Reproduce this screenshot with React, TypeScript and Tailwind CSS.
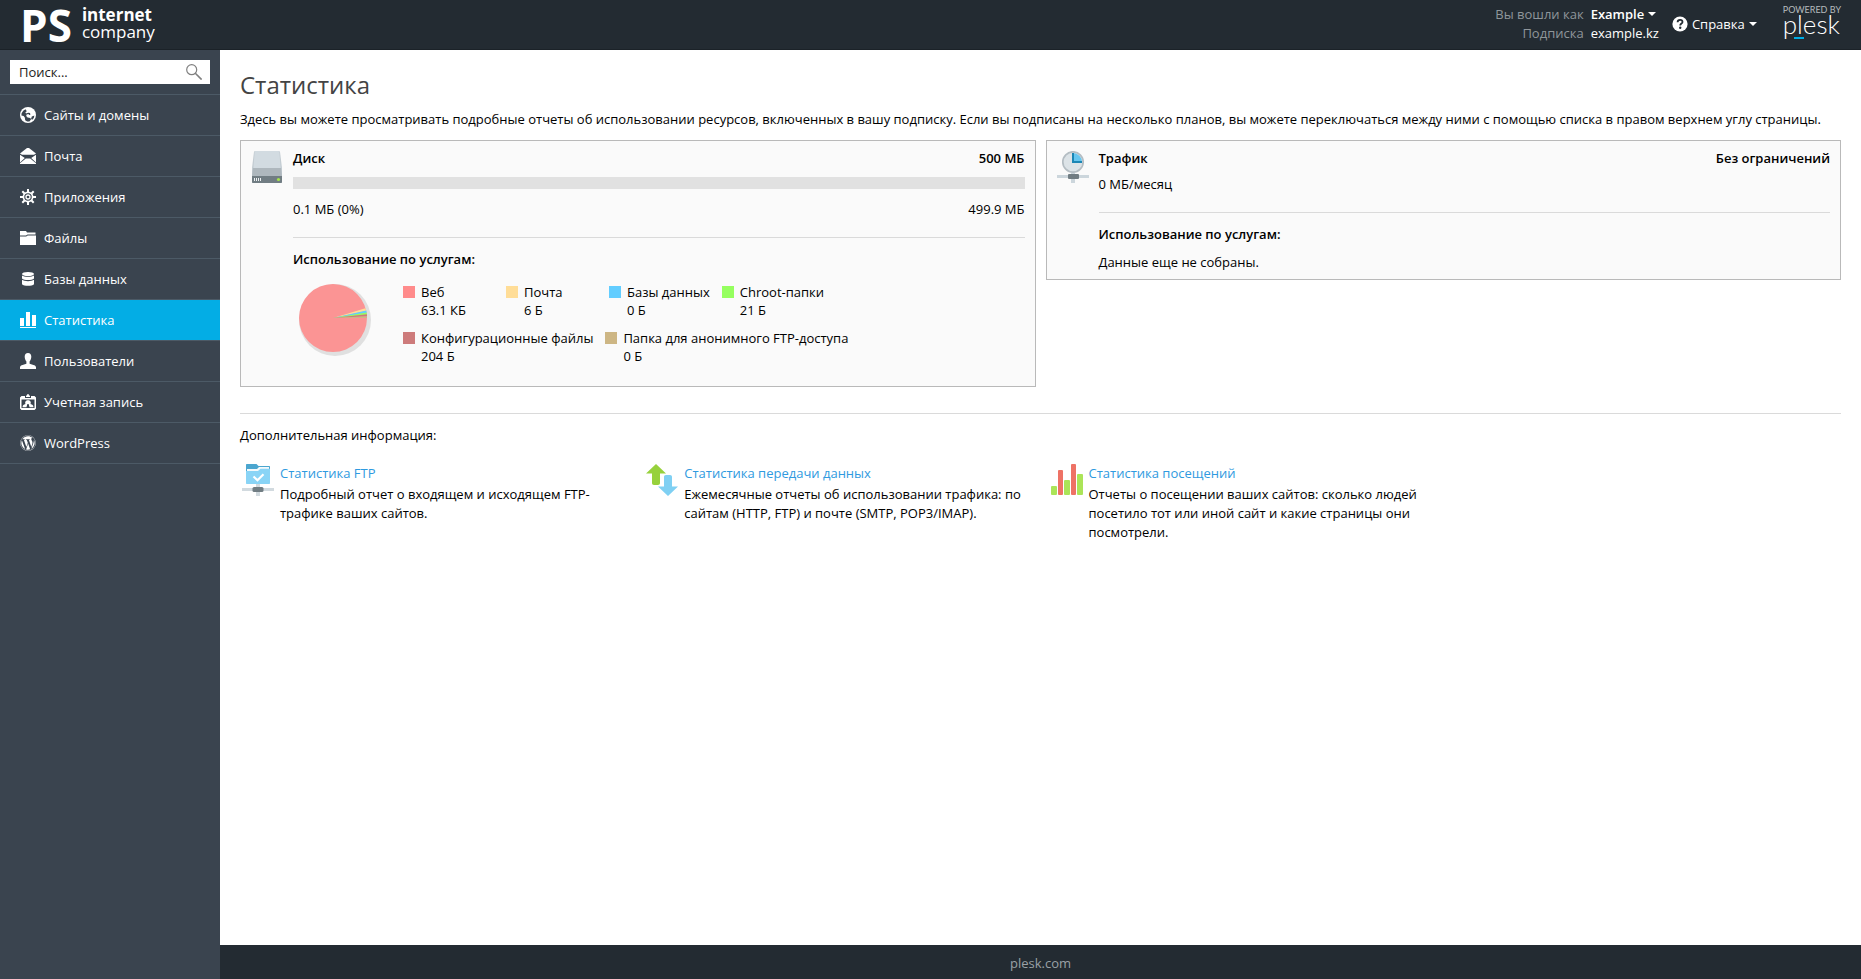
import type { ReactNode } from 'react';
import { FaWordpress } from 'react-icons/fa';

const menu: { label: string; icon: ReactNode; active?: boolean }[] = [
  { label: 'Сайты и домены', icon: <GlobeIcon /> },
  { label: 'Почта', icon: <MailIcon /> },
  { label: 'Приложения', icon: <GearIcon /> },
  { label: 'Файлы', icon: <FolderIcon /> },
  { label: 'Базы данных', icon: <DatabaseIcon /> },
  { label: 'Статистика', icon: <StatsIcon />, active: true },
  { label: 'Пользователи', icon: <UserIcon /> },
  { label: 'Учетная запись', icon: <AccountIcon /> },
  { label: 'WordPress', icon: <FaWordpress className="w-4 h-4" /> },
];

const services = [
  { name: 'Веб', value: '63.1 КБ', color: 'bg-[#ff8b8b]' },
  { name: 'Почта', value: '6 Б', color: 'bg-[#ffdd97]' },
  { name: 'Базы данных', value: '0 Б', color: 'bg-[#62cdff]' },
  { name: 'Chroot-папки', value: '21 Б', color: 'bg-[#95ff5f]' },
  { name: 'Конфигурационные файлы', value: '204 Б', color: 'bg-[#cd7b7b]' },
  { name: 'Папка для анонимного FTP-доступа', value: '0 Б', color: 'bg-[#cdb684]' },
];

const reports = [
  {
    title: 'Статистика FTP',
    text: 'Подробный отчет о входящем и исходящем FTP-трафике ваших сайтов.',
    icon: <FtpIcon />,
  },
  {
    title: 'Статистика передачи данных',
    text: 'Ежемесячные отчеты об использовании трафика: по сайтам (HTTP, FTP) и почте (SMTP, POP3/IMAP).',
    icon: <TransferIcon />,
  },
  {
    title: 'Статистика посещений',
    text: 'Отчеты о посещении ваших сайтов: сколько людей посетило тот или иной сайт и какие страницы они посмотрели.',
    icon: <VisitsIcon />,
  },
];

function GlobeIcon() {
  return (
    <svg viewBox="0 0 16 16" className="w-4 h-4">
      <circle cx="8" cy="8" r="8" fill="currentColor" />
      <path
        d="M5.500 2.200 3.200 3.800 1.600 6.200 1.400 8.400l2.200.6 1.200 1.600.4 2.600 2 1.400h2.200l1.600-2.200-.6-1.400-2.800-.4L6.200 9l.4-1.600 2-.4.4 1 1.400-.2-.4-1.800-1.800-.2L6 6.600l-.6-1.400 1.400-1z"
        fill="#3a444f"
      />
      <path d="M11.800 9.400l2.600-.8-.6 2.400-1.800 2-.8-1.600z" fill="#3a444f" />
    </svg>
  );
}

function MailIcon() {
  return (
    <svg viewBox="0 0 16 16" className="w-4 h-4" fill="currentColor">
      <path d="M0 5.600 7 0h2l7 5.600-2 1.200H2z" />
      <path d="M0 6.800 4.800 10 0 14.400zM16 6.800 11.200 10 16 14.400zM5.800 10.600h4.400L16 15.200v.8H0v-.8z" />
    </svg>
  );
}

function GearIcon() {
  return (
    <svg viewBox="0 0 16 16" className="w-4 h-4" fill="none" stroke="currentColor">
      <circle cx="8" cy="8" r="4.600" strokeWidth="1.700" />
      <circle cx="8" cy="8" r="2" strokeWidth="1.300" />
      <path
        d="M8 0v3M8 13v3M0 8h3M13 8h3M2.300 2.300l2.200 2.200M11.500 11.500l2.200 2.200M2.300 13.700l2.200-2.200M11.500 4.500l2.200-2.200"
        strokeWidth="2"
      />
    </svg>
  );
}

function FolderIcon() {
  return (
    <svg viewBox="0 0 16 16" className="w-4 h-4" fill="currentColor">
      <path d="M0 1h6l1 1.400h8.500V4.500H7.500L6 5.600H0z" />
      <path d="M0 6.600h6.200L7.800 5.500H16V15H0z" />
    </svg>
  );
}

function DatabaseIcon() {
  return (
    <svg viewBox="0 0 16 16" className="w-4 h-4" fill="currentColor">
      <ellipse cx="8" cy="3" rx="6" ry="2" />
      <path d="M2 4.400C4 6.200 12 6.200 14 4.400v3.200c-2 2-10 2-12 0z" />
      <path d="M2 8.800c2 1.800 10 1.800 12 0v4.400c-2 2.200-10 2.200-12 0z" />
    </svg>
  );
}

function StatsIcon() {
  return (
    <svg viewBox="0 0 16 16" className="w-4 h-4" fill="currentColor" shapeRendering="crispEdges">
      <path d="M0 6h4v8H0zM6 0h4v14H6zM12 3h4v11h-4zM0 15h16v1H0z" />
    </svg>
  );
}

function UserIcon() {
  return (
    <svg viewBox="0 0 16 16" className="w-4 h-4" fill="currentColor">
      <path d="M8 0c2.200 0 3.300 1.500 3.300 3.600 0 1.900-.7 3.800-1.700 4.900v2.200l4.600 1.500c1.200.4 1.800 1.200 1.800 2.400V16H0v-1.400c0-1.200.6-2 1.800-2.400l4.600-1.500V8.500C5.400 7.400 4.700 5.500 4.700 3.600 4.700 1.500 5.800 0 8 0z" />
    </svg>
  );
}

function AccountIcon() {
  return (
    <svg viewBox="0 0 16 16" className="w-4 h-4" fill="currentColor">
      <path d="M6 1.500h1C7 .6 7.400 0 8 0s1 .6 1 1.500h1V3H6z" />
      <path d="M1.500 2H5v2h6V2h3.500L16 3.500v11L14.500 16h-13L0 14.500v-11zM1.500 5.500V14h13V5.500z" fillRule="evenodd" />
      <path d="M2.500 13.300c0-2 1.200-2.700 3-3.300C4.900 8.800 4.900 6.200 8 6.200s3.100 2.600 2.500 3.800c1.800.6 3 1.300 3 3.300H9.600L8.600 10H7.400l-1 3.300z" />
    </svg>
  );
}

function SearchIcon() {
  return (
    <svg viewBox="0 0 16 16" className="w-4 h-4" fill="none" stroke="#808080">
      <circle cx="5.700" cy="5.700" r="5" strokeWidth="1.200" />
      <path d="M9.300 9.300 15.600 15.600" strokeWidth="1.600" />
    </svg>
  );
}

function Caret() {
  return (
    <svg viewBox="0 0 8 4" className="w-2 h-1" fill="currentColor">
      <path d="M0 0h8L4 4z" />
    </svg>
  );
}

function HelpIcon() {
  return (
    <svg viewBox="0 0 16 16" className="w-4 h-4">
      <circle cx="8" cy="8" r="7.600" fill="#fff" />
      <path d="M5.600 6.200c0-1.500 1-2.400 2.500-2.400s2.400.9 2.400 2.100C10.500 7.600 8.200 7.500 8.200 9.500" fill="none" stroke="#232b32" strokeWidth="1.800" />
      <circle cx="8.200" cy="11.800" r="1.200" fill="#232b32" />
    </svg>
  );
}

function DiskIcon() {
  return (
    <svg viewBox="0 0 32 32" className="w-8 h-8">
      <path d="M4.500 0h23c1 0 1.500.5 1.600 1.500L31 17v8H1v-8L2.900 1.500C3 .5 3.500 0 4.500 0z" fill="#c3ccd2" />
      <path d="M5 0h22c1 0 1.300.5 1.400 1.500L29.500 17h-27L3.600 1.500C3.700.5 4 0 5 0z" fill="#d2dbe1" />
      <path d="M2 17h28l1 8H1z" fill="#aeb7bd" />
      <path d="M1 25h30v6c0 .7-.3 1-1 1H2c-.7 0-1-.3-1-1z" fill="#717d83" />
      <path d="M3 27h1v3H3zM5 27h1v3H5zM7 27h1v3H7zM9 27h1v3H9z" fill="#eef1f3" />
      <circle cx="27.500" cy="28.500" r="1.600" fill="#a5e64b" />
    </svg>
  );
}

function TrafficIcon() {
  return (
    <svg viewBox="0 0 32 32" className="w-8 h-8">
      <path d="M14 22h4v10h-4zM0 24h32v3H0z" fill="#ccd6dc" />
      <circle cx="16" cy="11" r="10.200" fill="#dce3e7" stroke="#b4bdc3" strokeWidth="1.700" />
      <path d="M16 11V2a9 9 0 0 1 9 9z" fill="#66c6ef" />
      <path d="M16 2v9h9" fill="none" stroke="#1b86b4" strokeWidth="2" />
      <rect x="11" y="23" width="11" height="5" rx="1" fill="#717d83" />
    </svg>
  );
}

function FtpIcon() {
  return (
    <svg viewBox="0 0 32 32" className="w-8 h-8">
      <path d="M14 20h4v12h-4zM0 24h32v3H0z" fill="#d2dadf" />
      <path d="M5 0h9.500l2 2H27c.7 0 1 .3 1 1v6H4V1c0-.7.300-1 1-1z" fill="#4ba6cf" />
      <path d="M5 5h10l2-2h10v8H5z" fill="#f4fafc" />
      <path d="M4 7h12l2.500-2.200H28V19c0 .7-.3 1-1 1H5c-.7 0-1-.3-1-1z" fill="#89d4f6" />
      <path d="M11.500 12.500l4 3.700 6-6" fill="none" stroke="#fff" strokeWidth="2.200" />
      <rect x="10.500" y="23" width="11" height="5" rx="1.500" fill="#717d83" />
    </svg>
  );
}

function TransferIcon() {
  return (
    <svg viewBox="0 0 32 32" className="w-8 h-8">
      <path d="M10 0 20 9.500h-6V19c0 1.300-.7 2-2 2H8c-1.300 0-2-.7-2-2V9.500H0z" fill="#97d13c" />
      <path d="M22 32 12 22.500h6V13c0-1.300.7-2 2-2h4c1.300 0 2 .7 2 2v9.500h6z" fill="#7fd0f3" />
    </svg>
  );
}

function VisitsIcon() {
  return (
    <svg viewBox="0 0 32 32" className="w-8 h-8">
      <g fill="#abe458">
        <rect x="0" y="22" width="6" height="9" rx="1" />
        <rect x="13" y="16" width="6" height="15" rx="1" />
        <rect x="26" y="10" width="6" height="21" rx="1" />
      </g>
      <g fill="#ee7265">
        <rect x="7" y="6" width="5" height="25" rx="1" />
        <rect x="20" y="0" width="5" height="31" rx="1" />
      </g>
    </svg>
  );
}

function PieChart() {
  return (
    <svg viewBox="0 0 74 74" className="w-[74px] h-[74px] shrink-0">
      <circle cx="37" cy="37" r="36" fill="#e0e0e0" />
      <circle cx="35" cy="35" r="34" fill="#fb9494" />
      <path d="M35 35 67.400 25.200 68.300 28z" fill="#ffdd97" />
      <path d="M35 35 68.300 27.500 68.700 30z" fill="#62cdff" />
      <path d="M35 35 68.600 29.400 69 31.800z" fill="#95ff5f" />
      <path d="M35 35 68.900 31.200 69 33.500z" fill="#cd7b7b" />
      <path d="M35 35 69 33.200V35z" fill="#cdb684" />
    </svg>
  );
}

function Panel({ icon, title, limit, children }: { icon: ReactNode; title: string; limit: string; children: ReactNode }) {
  return (
    <section className="flex-1 flex gap-2.5 px-2.5 py-2 bg-[#fafafa] border border-[#b9b9b9]">
      <div className="shrink-0 pt-0.5">{icon}</div>
      <div className="flex-1">
        <div className="flex justify-between font-semibold">
          <h2>{title}</h2>
          <span>{limit}</span>
        </div>
        {children}
      </div>
    </section>
  );
}

function Header() {
  return (
    <header className="h-[50px] shrink-0 flex items-center justify-between px-5 bg-[#232b32] border-b border-[#1b2228] text-white">
      <a href="#" className="flex items-center gap-2.5">
        <span className="text-[44px] leading-[48px] font-bold">PS</span>
        <span className="pb-[3px] text-[17px] leading-[17px]">
          <b className="block">internet</b>
          company
        </span>
      </a>
      <div className="flex items-center">
        <div className="grid grid-cols-[auto_auto] gap-x-[7px] pb-0.5 leading-[19px]">
          <span className="text-right text-[#8f969b]">Вы вошли как</span>
          <button className="flex items-center gap-1 font-semibold">
            Example <Caret />
          </button>
          <span className="text-right text-[#8f969b]">Подписка</span>
          <span>example.kz</span>
        </div>
        <button className="flex items-center gap-1 ml-[13px] pb-0.5">
          <HelpIcon />
          Справка <Caret />
        </button>
        <a href="#" className="self-start ml-[26px] font-[Lato]">
          <span className="block text-[9px] leading-[10px] text-[#b5babd]">POWERED BY</span>
          <span className="relative block text-[26px] leading-[18px] font-light">
            plesk
            <i className="absolute left-[11px] -bottom-1.5 w-2.5 h-0.5 bg-[#00ade6]" />
          </span>
        </a>
      </div>
    </header>
  );
}

function Sidebar() {
  return (
    <aside className="w-[220px] shrink-0 bg-[#3a444f] text-white">
      <div className="p-2.5 border-b border-[#4c5a66]">
        <form className="h-6 flex items-center pr-2 bg-white">
          <input
            aria-label="Поиск"
            placeholder="Поиск..."
            className="flex-1 min-w-0 px-[9px] text-black placeholder:text-[#222] outline-none"
          />
          <button type="button" aria-label="Найти">
            <SearchIcon />
          </button>
        </form>
      </div>
      <nav>
        {menu.map((item) => (
          <a
            key={item.label}
            href="#"
            className={`h-[41px] flex items-center gap-2 px-5 border-b border-[#4c5a66] ${item.active ? 'bg-[#03ade5]' : ''}`}
          >
            {item.icon}
            {item.label}
          </a>
        ))}
      </nav>
    </aside>
  );
}

export default function App() {
  return (
    <div className="min-h-screen flex flex-col bg-white text-black text-[13px] leading-[18px] font-['Open_Sans',sans-serif]">
      <Header />
      <div className="flex-1 flex">
        <Sidebar />
        <div className="flex-1 flex flex-col">
          <main className="flex-1 p-5">
            <h1 className="mb-2.5 text-2xl leading-[30px] text-[#444]">Статистика</h1>
            <p className="mb-3">
              Здесь вы можете просматривать подробные отчеты об использовании ресурсов, включенных в вашу подписку. Если вы
              подписаны на несколько планов, вы можете переключаться между ними с помощью списка в правом верхнем углу страницы.
            </p>

            <div className="flex items-start gap-2.5">
              <Panel icon={<DiskIcon />} title="Диск" limit="500 МБ">
                <div className="h-3 mt-2.5 bg-[#e1e1e1]" />
                <div className="flex justify-between mt-[11px]">
                  <span>0.1 МБ (0%)</span>
                  <span>499.9 МБ</span>
                </div>
                <hr className="mt-[19px] mb-3 border-[#dadada]" />
                <h3 className="font-semibold">Использование по услугам:</h3>
                <div className="flex gap-[31px] mt-[15px] pl-[5px] pb-[13px]">
                  <PieChart />
                  <ul className="flex flex-wrap gap-x-3 gap-y-2.5 max-w-[460px]">
                    {services.map((s) => (
                      <li key={s.name} className="flex gap-1.5 min-w-[91px]">
                        <span className={`w-3 h-3 mt-[3px] ${s.color}`} />
                        <div>
                          {s.name}
                          <br />
                          {s.value}
                        </div>
                      </li>
                    ))}
                  </ul>
                </div>
              </Panel>

              <Panel icon={<TrafficIcon />} title="Трафик" limit="Без ограничений">
                <p className="mt-2">0 МБ/месяц</p>
                <hr className="mt-[19px] mb-3 border-[#dadada]" />
                <h3 className="font-semibold">Использование по услугам:</h3>
                <p className="mt-2.5">Данные еще не собраны.</p>
              </Panel>
            </div>

            <hr className="mt-[26px] mb-3 border-[#dadada]" />
            <p>Дополнительная информация:</p>

            {/* Reports */}
            <div className="grid grid-cols-4 mt-5 -mr-4">
              {reports.map((r) => (
                <div key={r.title} className="flex gap-1.5 pl-0.5 pr-3.5">
                  <div className="shrink-0">{r.icon}</div>
                  <div>
                    <a href="#" className="block mb-[3px] text-[#2f9ae0]">
                      {r.title}
                    </a>
                    <p className="leading-[19px]">{r.text}</p>
                  </div>
                </div>
              ))}
            </div>
          </main>

          <footer className="h-[34px] flex items-center justify-center pt-0.5 bg-[#232b32]">
            <a href="#" className="text-[#9aa1a6]">
              plesk.com
            </a>
          </footer>
        </div>
      </div>
    </div>
  );
}
